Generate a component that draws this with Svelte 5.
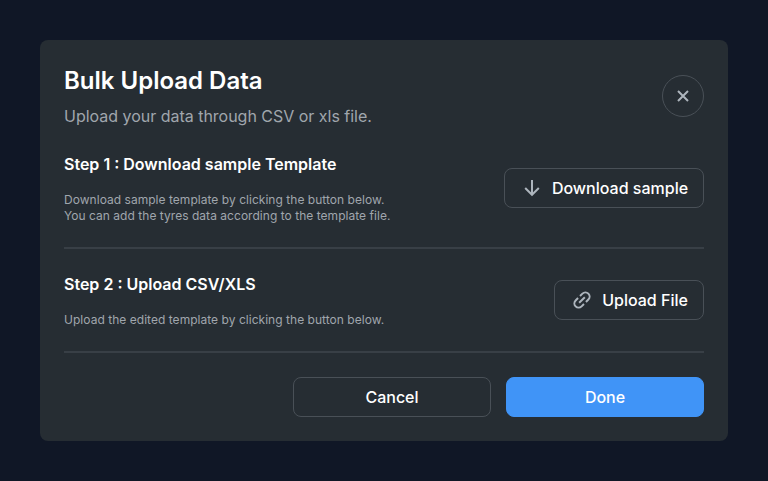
<script>
  const steps = [
    {
      title: 'Step 1 : Download sample Template',
      lines: ['Download sample template by clicking the button below.', 'You can add the tyres data according to the template file.'],
      action: 'Download sample',
      icon: 'arrow'
    },
    {
      title: 'Step 2 : Upload CSV/XLS',
      lines: ['Upload the edited template by clicking the button below.'],
      action: 'Upload File',
      icon: 'link'
    }
  ];
</script>

<main>
  <section class="dialog">
    <header>
      <div>
        <h1>Bulk Upload Data</h1>
        <p class="subtitle">Upload your data through CSV or xls file.</p>
      </div>
      <button class="close" aria-label="Close">
        <svg width="20" height="20" viewBox="0 0 20 20"><path d="M5 5L15 15M15 5L5 15" /></svg>
      </button>
    </header>

    {#each steps as step}
      <div class="step">
        <div>
          <h2>{step.title}</h2>
          <p class="desc">
            {#each step.lines as line}<span>{line}</span>{/each}
          </p>
        </div>
        <button class="action {step.icon}">
          {#if step.icon === 'arrow'}
            <svg width="24" height="24" viewBox="0 0 24 24"><path d="M12 4V19M5.2 12L12 18.8L18.8 12" /></svg>
          {:else}
            <svg width="24" height="24" viewBox="0 0 24 24">
              <path transform="rotate(-45 12 12)" d="M8 12H16M10.6 7.8H7.2A4.2 4.2 0 0 0 7.2 16.2H10.6M13.4 7.8H16.8A4.2 4.2 0 0 1 16.8 16.2H13.4" />
            </svg>
          {/if}
          <span>{step.action}</span>
        </button>
      </div>
      <hr />
    {/each}

    <footer>
      <button>Cancel</button>
      <button class="done">Done</button>
    </footer>
  </section>
</main>

<style>
  :global(body) {
    margin: 0;
    background: #101726;
  }
  main {
    box-sizing: border-box;
    height: 481px;
    padding: 40px;
    background: #101726;
    font-family: Inter, sans-serif;
    color: #fff;
  }
  .dialog {
    box-sizing: border-box;
    height: 401px;
    padding: 24px;
    border-radius: 8px;
    background: #262d33;
  }
  header,
  .step {
    display: flex;
    align-items: center;
    justify-content: space-between;
  }
  h1,
  h2,
  p {
    margin: 0;
  }
  h1 {
    font-size: 24px;
    line-height: 34px;
    font-weight: 600;
  }
  .subtitle {
    margin-top: 6px;
    font-size: 16px;
    line-height: 24px;
    letter-spacing: -0.015px;
    color: #a0a6ad;
  }
  h2 {
    font-size: 16px;
    line-height: 24px;
    font-weight: 600;
  }
  .desc {
    margin-top: 16px;
    font-size: 12px;
    line-height: 16px;
    letter-spacing: 0.035px;
    color: #a0a6ad;
  }
  .desc span {
    display: block;
  }
  .step {
    padding: 24px 0 23px;
  }
  hr {
    height: 2px;
    margin: 0;
    border: 0;
    background: #383f46;
  }
  hr + .step {
    padding-top: 23px;
  }
  button {
    box-sizing: border-box;
    display: flex;
    align-items: center;
    justify-content: center;
    height: 40px;
    padding: 0;
    border: 1px solid #495057;
    border-radius: 8px;
    background: transparent;
    color: #fff;
    font: 500 16px/24px Inter, sans-serif;
  }
  .close {
    width: 42px;
    height: 42px;
    border-radius: 50%;
  }
  .action {
    gap: 8px;
    width: 200px;
  }
  .action.link {
    width: 150px;
  }
  svg {
    flex: none;
    fill: none;
    stroke: #adb5bd;
    stroke-width: 2;
  }
  footer {
    display: flex;
    justify-content: flex-end;
    gap: 15px;
    margin-top: 24px;
  }
  footer button {
    width: 198px;
  }
  .done {
    border-color: #4094f7;
    background: #4094f7;
  }
</style>
